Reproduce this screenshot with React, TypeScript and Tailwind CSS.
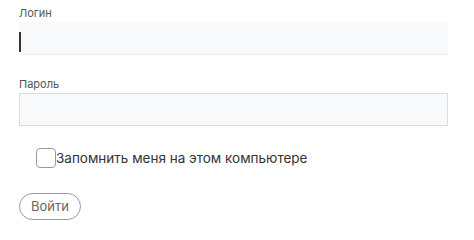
import React from "react"

export default function App() {
  return (
    <div className="w-[474px] h-[233px] bg-white px-[19px] pt-[6px] font-['Inter','Noto_Sans',sans-serif]">
      <form className="flex flex-col" onSubmit={(e) => e.preventDefault()}>
        <label className="text-[11px] leading-[14px] text-[#555] h-[16px]">Логин</label>
        <div className="relative">
          <input
            type="text"
            className="w-[429px] h-[33px] bg-[#f8f9fa] border-b border-[#ececec] outline-none px-2"
          />
          <span className="absolute left-0 top-[10px] w-[2px] h-[20px] bg-[#333]" />
        </div>

        <label className="mt-[22px] text-[11px] leading-[14px] text-[#555] h-[16px]">Пароль</label>
        <input
          type="password"
          className="w-[429px] h-[33px] bg-[#f8f9fa] border border-[#dcdcdc] outline-none px-2"
        />

        <label className="mt-[22px] ml-[17px] flex items-center h-[20px]">
          <span className="w-[20px] h-[20px] rounded-[4px] border-[1.5px] border-[#999] bg-white" />
          <span className="text-[13.5px] text-[#333]">Запомнить меня на этом компьютере</span>
        </label>

        <button
          type="submit"
          className="mt-[25px] w-[62px] h-[27px] rounded-full border border-[#999] text-[13px] text-[#666] bg-white"
        >
          Войти
        </button>
      </form>
    </div>
  )
}
